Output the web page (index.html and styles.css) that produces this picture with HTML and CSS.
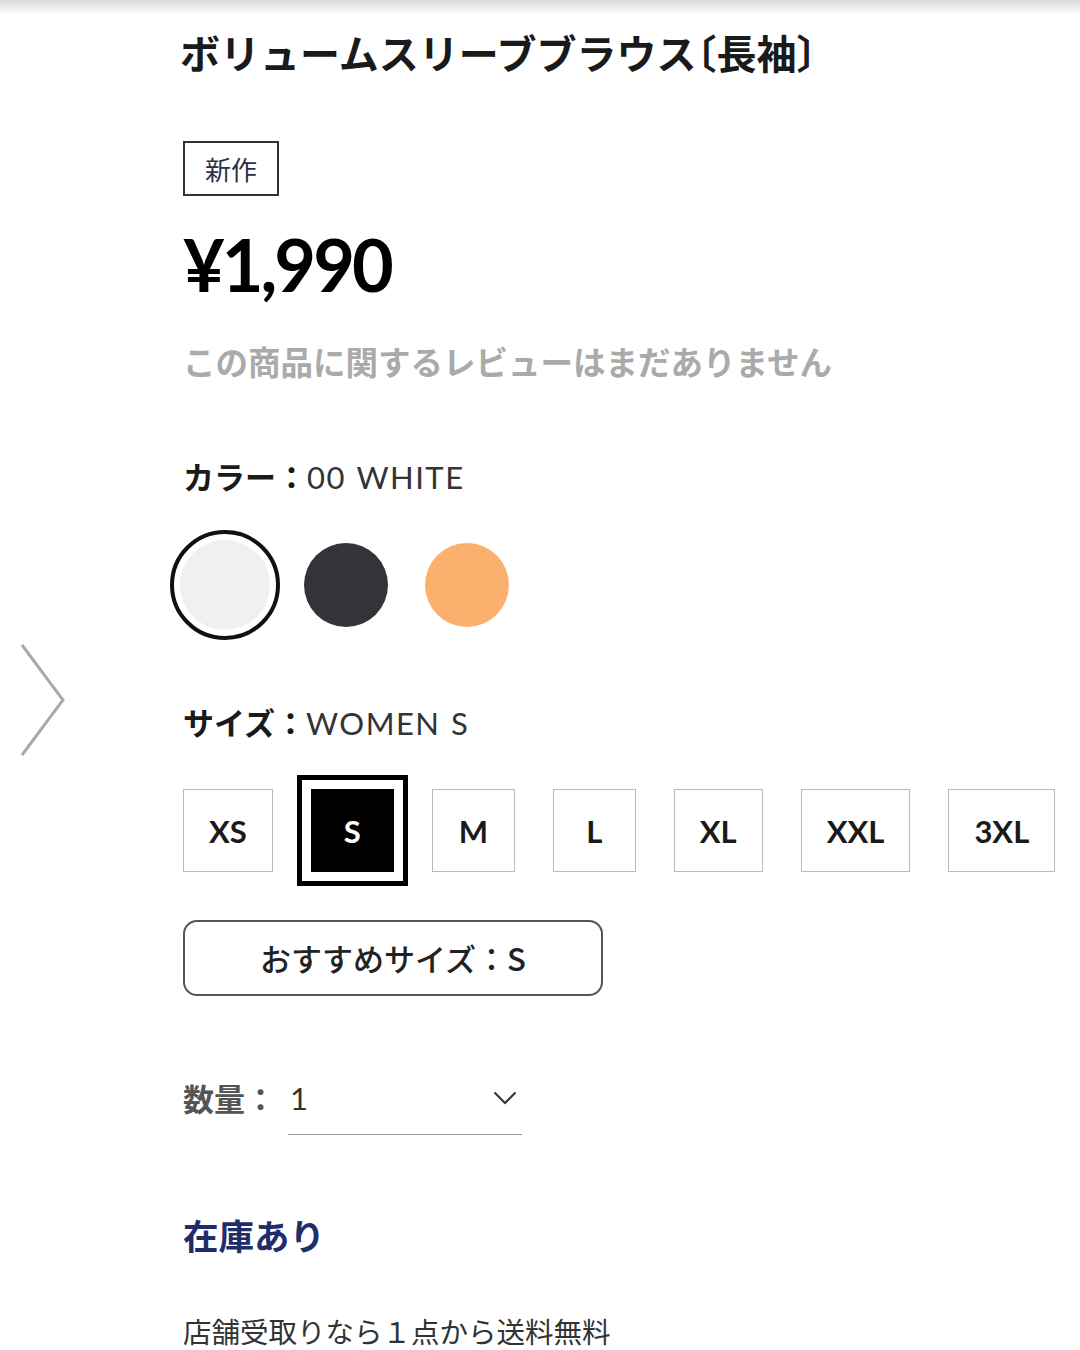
FILE: index.html
```html
<!DOCTYPE html>
<html lang="ja">
  <head>
    <meta charset="utf-8">
    <title>ボリュームスリーブブラウス〔長袖〕</title>
    <link rel="stylesheet" href="styles.css">
  </head>
  <body>
    <div class="top-shade"></div>

    <!-- carousel arrow over the left edge -->
    <div class="nav-next">
      <svg width="46" height="114" viewBox="0 0 46 114">
        <polyline points="2,2 43,57 2,112" fill="none" stroke="#aaa" stroke-width="3"></polyline>
      </svg>
    </div>

    <div class="product">
      <h1 class="product-name">ボリュームスリーブブラウス<span class="bracket">〔</span>長袖<span class="bracket">〕</span></h1>

      <div class="badge">新作</div>

      <div class="price">¥1,990</div>

      <div class="review-empty">この商品に関するレビューはまだありません</div>

      <div class="option-label">カラー：<span class="value">00 WHITE</span></div>
      <div class="swatches">
        <div class="swatch selected"><span class="chip white"></span></div>
        <div class="swatch"><span class="chip black"></span></div>
        <div class="swatch"><span class="chip orange"></span></div>
      </div>

      <div class="option-label size-label">サイズ：<span class="value">WOMEN S</span></div>
      <div class="sizes">
        <div class="size">XS</div>
        <div class="size selected">S</div>
        <div class="size">M</div>
        <div class="size">L</div>
        <div class="size">XL</div>
        <div class="size">XXL</div>
        <div class="size">3XL</div>
      </div>

      <div class="recommend">おすすめサイズ：S</div>

      <div class="quantity">
        <span class="qty-label">数量：</span>
        <div class="qty-select">
          <span>1</span>
          <svg width="24" height="14" viewBox="0 0 24 14">
            <polyline points="1.5,1.5 12,12 22.5,1.5" fill="none" stroke="#333" stroke-width="2"></polyline>
          </svg>
        </div>
      </div>

      <div class="stock">在庫あり</div>

      <div class="shipping-note">店舗受取りなら１点から送料無料</div>
    </div>
  </body>
</html>
```

FILE: styles.css
```css
body {
  background: #fff;
  color: #1a1a1a;
  font-family: 'Lato', 'Noto Sans CJK JP', sans-serif;
  margin: 0;
  overflow: hidden;
}

.top-shade {
  background: linear-gradient(#d9d9d9, #fff);
  height: 14px;
}

.nav-next {
  left: 20px;
  position: absolute;
  top: 643px;
}

.nav-next svg {
  display: block;
}

.product {
  padding-left: 183px;
}

.product-name {
  color: #1a1a1a;
  font-family: 'Noto Sans CJK JP', sans-serif;
  font-size: 40px;
  font-weight: 700;
  line-height: 52px;
  margin: 12px 0 0 -3px;
}

.product-name .bracket {
  font-feature-settings: "halt";
}

.badge {
  border: 2px solid #333;
  box-sizing: border-box;
  color: #2c2f45;
  display: inline-block;
  font-family: 'Noto Sans CJK JP', sans-serif;
  font-size: 26px;
  height: 55px;
  line-height: 51px;
  margin-top: 63px;
  padding: 0 20px;
  vertical-align: top;
}

.price {
  color: #000;
  font-size: 72px;
  font-weight: 700;
  letter-spacing: -3px;
  line-height: 72px;
  margin-top: 32px;
}

.review-empty {
  color: #aaa;
  font-family: 'Noto Sans CJK JP', sans-serif;
  font-size: 32.5px;
  font-weight: 700;
  line-height: 48px;
  margin-top: 37px;
}

.option-label {
  color: #1a1a1a;
  font-family: 'Noto Sans CJK JP', sans-serif;
  font-size: 31px;
  font-weight: 700;
  line-height: 44px;
  margin-top: 69px;
}

.option-label .value {
  color: #333;
  font-family: 'Lato', sans-serif;
  font-weight: 400;
  letter-spacing: 1.5px;
  word-spacing: 1px;
}

.swatches {
  display: flex;
  gap: 11px;
  margin-left: -13px;
  margin-top: 31px;
}

.swatch {
  align-items: center;
  display: flex;
  height: 110px;
  justify-content: center;
  width: 110px;
}

.chip {
  border-radius: 50%;
  display: block;
  height: 84px;
  width: 84px;
}

.swatch.selected {
  border: 4px solid #111;
  border-radius: 50%;
  box-sizing: border-box;
}

.swatch.selected .chip {
  height: 90px;
  width: 90px;
}

.chip.white {
  background: #f0f0f0;
}

.chip.black {
  background: #333338;
}

.chip.orange {
  background: #fbb06e;
}

.size-label {
  margin-top: 60px;
}

.sizes {
  display: flex;
  gap: 38px;
  margin-top: 44px;
}

.size {
  align-items: center;
  border: 1.5px solid #bbb;
  box-sizing: border-box;
  color: #1a1a1a;
  display: flex;
  font-size: 31px;
  font-weight: 700;
  height: 83px;
  justify-content: center;
  min-width: 83px;
  padding: 0 25px;
}

.size.selected {
  background: #000;
  border-color: #000;
  color: #fff;
  outline: 5px solid #000;
  outline-offset: 9px;
}

.recommend {
  border: 2px solid #555;
  border-radius: 14px;
  box-sizing: border-box;
  color: #222;
  font-family: 'Noto Sans CJK JP', sans-serif;
  font-size: 31px;
  font-weight: 500;
  height: 76px;
  line-height: 72px;
  margin-top: 48px;
  text-align: center;
  width: 420px;
}

.quantity {
  align-items: flex-start;
  display: flex;
  gap: 12px;
  margin-top: 78px;
}

.qty-label {
  color: #555;
  font-family: 'Noto Sans CJK JP', sans-serif;
  font-size: 31px;
  font-weight: 700;
  line-height: 48px;
}

.qty-select {
  align-items: center;
  border-bottom: 1.5px solid #999;
  box-sizing: border-box;
  color: #333;
  display: flex;
  font-size: 31px;
  height: 61px;
  justify-content: space-between;
  line-height: 48px;
  padding: 0 5px 13px 2px;
  width: 234px;
}

.stock {
  color: #1f2d6b;
  font-family: 'Noto Sans CJK JP', sans-serif;
  font-size: 35.5px;
  font-weight: 700;
  line-height: 48px;
  margin-top: 76px;
}

.shipping-note {
  color: #333;
  font-family: 'Noto Sans CJK JP', sans-serif;
  font-size: 28.5px;
  line-height: 34px;
  margin-top: 55px;
}
```
